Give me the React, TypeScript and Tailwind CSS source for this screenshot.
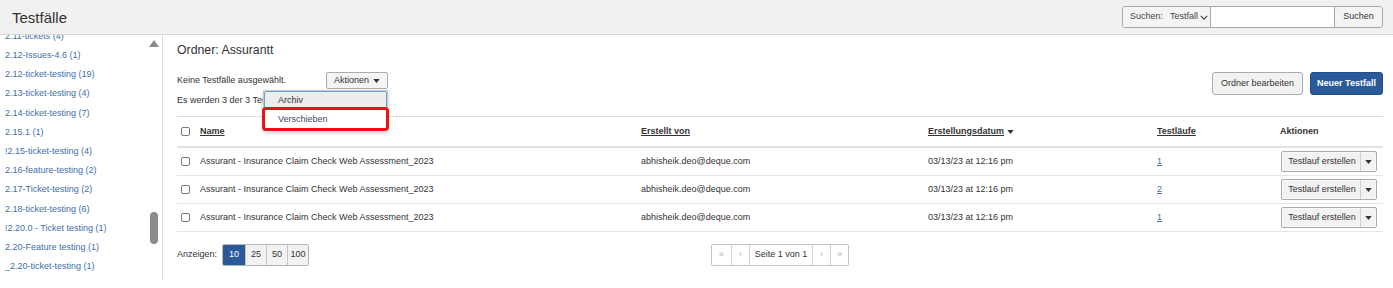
import React from "react";

const sidebarItems = [
  "2.11-tickets (4)",
  "2.12-Issues-4.6 (1)",
  "2.12-ticket-testing (19)",
  "2.13-ticket-testing (4)",
  "2.14-ticket-testing (7)",
  "2.15.1 (1)",
  "!2.15-ticket-testing (4)",
  "2.16-feature-testing (2)",
  "2.17-Ticket-testing (2)",
  "2.18-ticket-testing (6)",
  "!2.20.0 - Ticket testing (1)",
  "2.20-Feature testing (1)",
  "_2.20-ticket-testing (1)",
];

const rows = [
  { name: "Assurant - Insurance Claim Check Web Assessment_2023", by: "abhisheik.deo@deque.com", date: "03/13/23 at 12:16 pm", runs: "1" },
  { name: "Assurant - Insurance Claim Check Web Assessment_2023", by: "abhisheik.deo@deque.com", date: "03/13/23 at 12:16 pm", runs: "2" },
  { name: "Assurant - Insurance Claim Check Web Assessment_2023", by: "abhisheik.deo@deque.com", date: "03/13/23 at 12:16 pm", runs: "1" },
];

function Caret({ className = "" }: { className?: string }) {
  return (
    <svg viewBox="0 0 8 5" className={className} width="7" height="4">
      <path d="M0 0 L8 0 L4 5 Z" fill="currentColor" />
    </svg>
  );
}

function Checkbox() {
  return <span className="block w-[9px] h-[9px] rounded-[2px] border border-[#7a7a7a] bg-white" />;
}

export default function App() {
  return (
    <div className="w-[1393px] h-[288px] bg-white text-[#333] overflow-hidden font-['Liberation_Sans',Arial,sans-serif]">
      {/* Header */}
      <header className="h-[35px] bg-[#f1f1f1] border-b border-[#d8d8d8] flex items-center justify-between pl-[12px] pr-[10px]">
        <h1 className="text-[15px] text-[#333] leading-none">Testfälle</h1>
        <div className="flex h-[22px] border border-[#a8a8a8] rounded-[3px] overflow-hidden text-[9px]">
          <div className="w-[88px] flex items-center pl-[7px] bg-[#f4f4f4] border-r border-[#a8a8a8]">
            <span className="text-[#444]">Suchen:</span>
            <span className="ml-[7px] text-[#444]">Testfall</span>
            <svg viewBox="0 0 10 6" width="8" height="5" className="ml-[2px] text-[#444]">
              <path d="M1 1 L5 5 L9 1" fill="none" stroke="currentColor" strokeWidth="1.5" />
            </svg>
          </div>
          <div className="w-[123px] bg-white" />
          <div className="w-[48px] bg-[#f4f4f4] border-l border-[#a8a8a8] flex items-center justify-center text-[#333]">
            Suchen
          </div>
        </div>
      </header>

      <div className="flex h-[244px]">
        {/* Sidebar */}
        <aside className="w-[163px] shrink-0 border-r border-[#dcdcdc] relative overflow-hidden">
          <ul className="-mt-[8px] pl-[5px]">
            {sidebarItems.map((s) => (
              <li key={s} className="h-[19.2px] flex items-center text-[9px] text-[#3f6eaa] whitespace-nowrap">
                {s}
              </li>
            ))}
          </ul>
          <svg viewBox="0 0 10 7" width="10" height="7" className="absolute left-[149px] top-[5px] text-[#8a8a8a]">
            <path d="M5 0 L10 7 L0 7 Z" fill="currentColor" />
          </svg>
          <div className="absolute left-[150px] top-[177px] w-[8px] h-[32px] rounded-full bg-[#8c8c8c]" />
        </aside>

        {/* Main */}
        <main className="flex-1 pl-[14px] pr-[10px] text-[9px]">
          <div className="h-[30px] flex items-center">
            <h2 className="text-[12.3px] text-[#333]">Ordner: Assurantt</h2>
          </div>

          <div className="flex justify-between items-start mt-[7px]">
            <div>
              <div className="h-[17px] flex items-center">
                <span className="w-[149px]">Keine Testfälle ausgewählt.</span>
                <div className="relative">
                  <button className="h-[17px] w-[62px] flex items-center justify-center gap-[4px] bg-[#f4f4f4] border border-[#ababab] rounded-[2px] text-[#333]">
                    Aktionen <Caret className="text-[#333]" />
                  </button>
                  <div className="absolute right-0 top-[18px] w-[125px] bg-white border border-[#c8c8c8] shadow-[0_2px_4px_rgba(0,0,0,0.2)] z-10">
                    <div className="h-[19px] flex items-center pl-[13px] bg-[#ececec] border border-[#6e9fd9] rounded-[2px] text-[#333]">
                      Archiv
                    </div>
                    <div className="relative h-[20px] flex items-center pl-[14px] text-[#3c4a66]">
                      Verschieben
                      <span className="absolute -left-[2px] -right-[2px] -top-[3px] -bottom-[1px] border-[3px] border-[#e8121b] rounded-[4px]" />
                    </div>
                  </div>
                </div>
              </div>
              <div className="h-[17px] flex items-center mt-[3px]">Es werden 3 der 3 Testfälle angezeigt.</div>
            </div>
            <div className="flex gap-[7px]">
              <button className="h-[23px] w-[91px] bg-[#f2f2f2] border border-[#ababab] rounded-[3px] text-[#333]">
                Ordner bearbeiten
              </button>
              <button className="h-[23px] w-[73px] bg-[#2b5a9b] border border-[#244d86] rounded-[3px] text-white font-bold">
                Neuer Testfall
              </button>
            </div>
          </div>

          {/* Table */}
          <div className="mt-[7px] border-t border-[#dedede]">
            <div className="grid grid-cols-[23px_441px_287px_229px_123px_1fr] h-[31px] items-center border-b-2 border-[#e2e2e2] font-bold">
              <div className="pl-[4px]"><Checkbox /></div>
              <span className="underline">Name</span>
              <span className="underline">Erstellt von</span>
              <span className="flex items-center gap-[3px]"><span className="underline">Erstellungsdatum</span><Caret /></span>
              <span className="underline">Testläufe</span>
              <span>Aktionen</span>
            </div>
            {rows.map((r, i) => (
              <div key={i} className="grid grid-cols-[23px_441px_287px_229px_123px_1fr] h-[28px] items-center border-b border-[#e6e6e6]">
                <div className="pl-[4px]"><Checkbox /></div>
                <span>{r.name}</span>
                <span>{r.by}</span>
                <span>{r.date}</span>
                <span className="text-[#3f6eaa] underline">{r.runs}</span>
                <div className="pl-[1px]">
                  <div className="w-[96px] h-[21px] flex bg-[#f2f2f2] border border-[#ababab] rounded-[2px] shadow-[inset_0_0_0_1px_#fafafa]">
                    <span className="flex-1 flex items-center justify-center pl-[2px]">Testlauf erstellen</span>
                    <span className="w-[16px] border-l border-[#cfcfcf] flex items-center justify-center"><Caret /></span>
                  </div>
                </div>
              </div>
            ))}
          </div>

          {/* Footer */}
          <div className="grid grid-cols-[1fr_auto_1fr] items-center mt-[12px]">
            <div className="flex items-center">
              <span className="mr-[5px]">Anzeigen:</span>
              <div className="flex h-[22px] border border-[#b5b5b5] rounded-[2px] overflow-hidden">
                <span className="w-[22px] flex items-center justify-center bg-[#2b5a9b] text-white">10</span>
                <span className="w-[21px] flex items-center justify-center bg-[#f2f2f2] border-l border-[#c4c4c4]">25</span>
                <span className="w-[21px] flex items-center justify-center bg-[#f2f2f2] border-l border-[#c4c4c4]">50</span>
                <span className="w-[21px] flex items-center justify-center bg-[#f2f2f2] border-l border-[#c4c4c4]">100</span>
              </div>
            </div>
            <div className="flex h-[22px] border border-[#c4c4c4] rounded-[2px] overflow-hidden">
              <span className="w-[19px] flex items-center justify-center text-[#aaa]">«</span>
              <span className="w-[18px] flex items-center justify-center text-[#aaa] border-l border-[#d2d2d2]">‹</span>
              <span className="w-[63px] flex items-center justify-center border-l border-[#d2d2d2]">Seite 1 von 1</span>
              <span className="w-[18px] flex items-center justify-center text-[#aaa] border-l border-[#d2d2d2]">›</span>
              <span className="w-[18px] flex items-center justify-center text-[#aaa] border-l border-[#d2d2d2]">»</span>
            </div>
            <div />
          </div>
        </main>
      </div>
    </div>
  );
}
